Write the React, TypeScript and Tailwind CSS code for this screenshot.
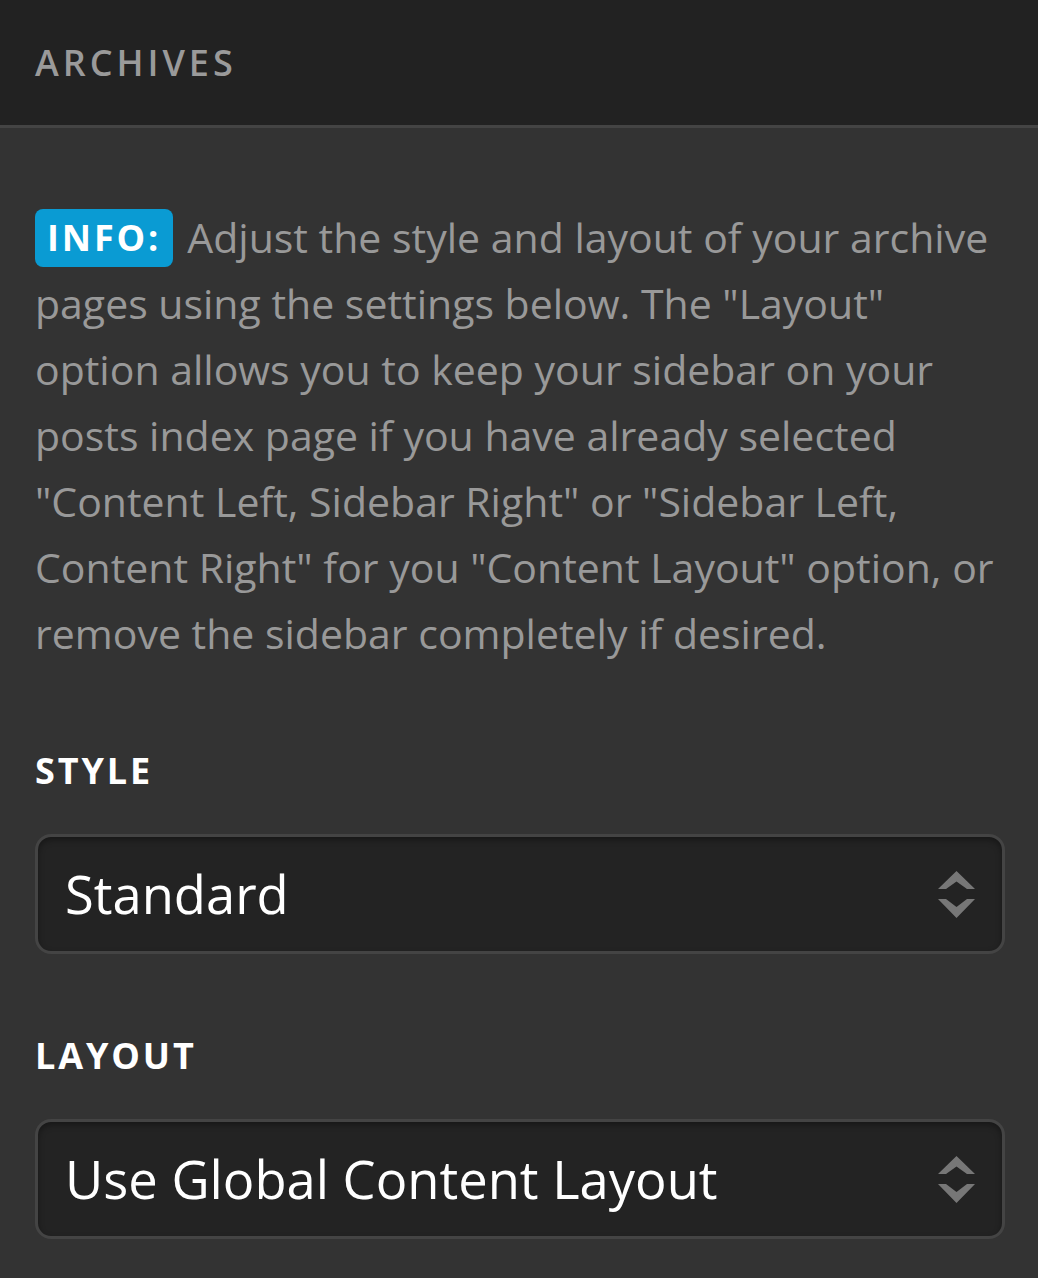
const Arrows = () => (
  <svg width="37" height="47" viewBox="0 0 37 47" className="shrink-0">
    <path d="M18.5 0 L37 18 L29 18 L18.5 10.5 L8 18 L0 18 Z" fill="#777" />
    <path d="M18.5 47 L37 28 L29 28 L18.5 36 L8 28 L0 28 Z" fill="#777" />
  </svg>
);

const Select = ({ value }: { value: string }) => (
  <div className="flex h-[120px] items-center justify-between rounded-[16px] border-[3px] border-[#444] bg-[#232323] pl-[27px] pr-[27px] shadow-[inset_0_3px_6px_rgba(0,0,0,0.35)]">
    <span className="text-[52.5px] leading-none text-white">{value}</span>
    <Arrows />
  </div>
);

export default function App() {
  return (
    <div className="min-h-[1278px] bg-[#333] font-['Open_Sans',sans-serif]">
      <div className="flex h-[128px] items-center border-b-[3px] border-[#444] bg-[#222] px-[35px]">
        <h2 className="text-[36px] font-semibold uppercase tracking-[0.11em] text-[#9a9a9a]">Archives</h2>
      </div>
      <div className="pl-[35px] pr-[33px] pt-[76px]">
        <p className="text-[41px] leading-[66px] text-[#999]">
          <span className="mr-[14px] inline-block rounded-[8px] bg-[#0a9bd3] px-[12px] align-[2px] text-[36px] leading-[58px] font-bold tracking-[0.08em] text-white">
            INFO:
          </span>
          Adjust the style and layout of your archive pages using the settings below. The "Layout" option allows you to keep your sidebar on your posts index page if you have already selected "Content Left, Sidebar Right" or "Sidebar Left, Content Right" for you "Content Layout" option, or remove the sidebar completely if desired.
        </p>
        <div className="mt-[78px]">
          <h3 className="mb-[36px] text-[36px] font-bold uppercase tracking-[0.08em] text-white">Style</h3>
          <Select value="Standard" />
        </div>
        <div className="mt-[75px]">
          <h3 className="mb-[36px] text-[36px] font-bold uppercase tracking-[0.08em] text-white">Layout</h3>
          <Select value="Use Global Content Layout" />
        </div>
      </div>
    </div>
  );
}
